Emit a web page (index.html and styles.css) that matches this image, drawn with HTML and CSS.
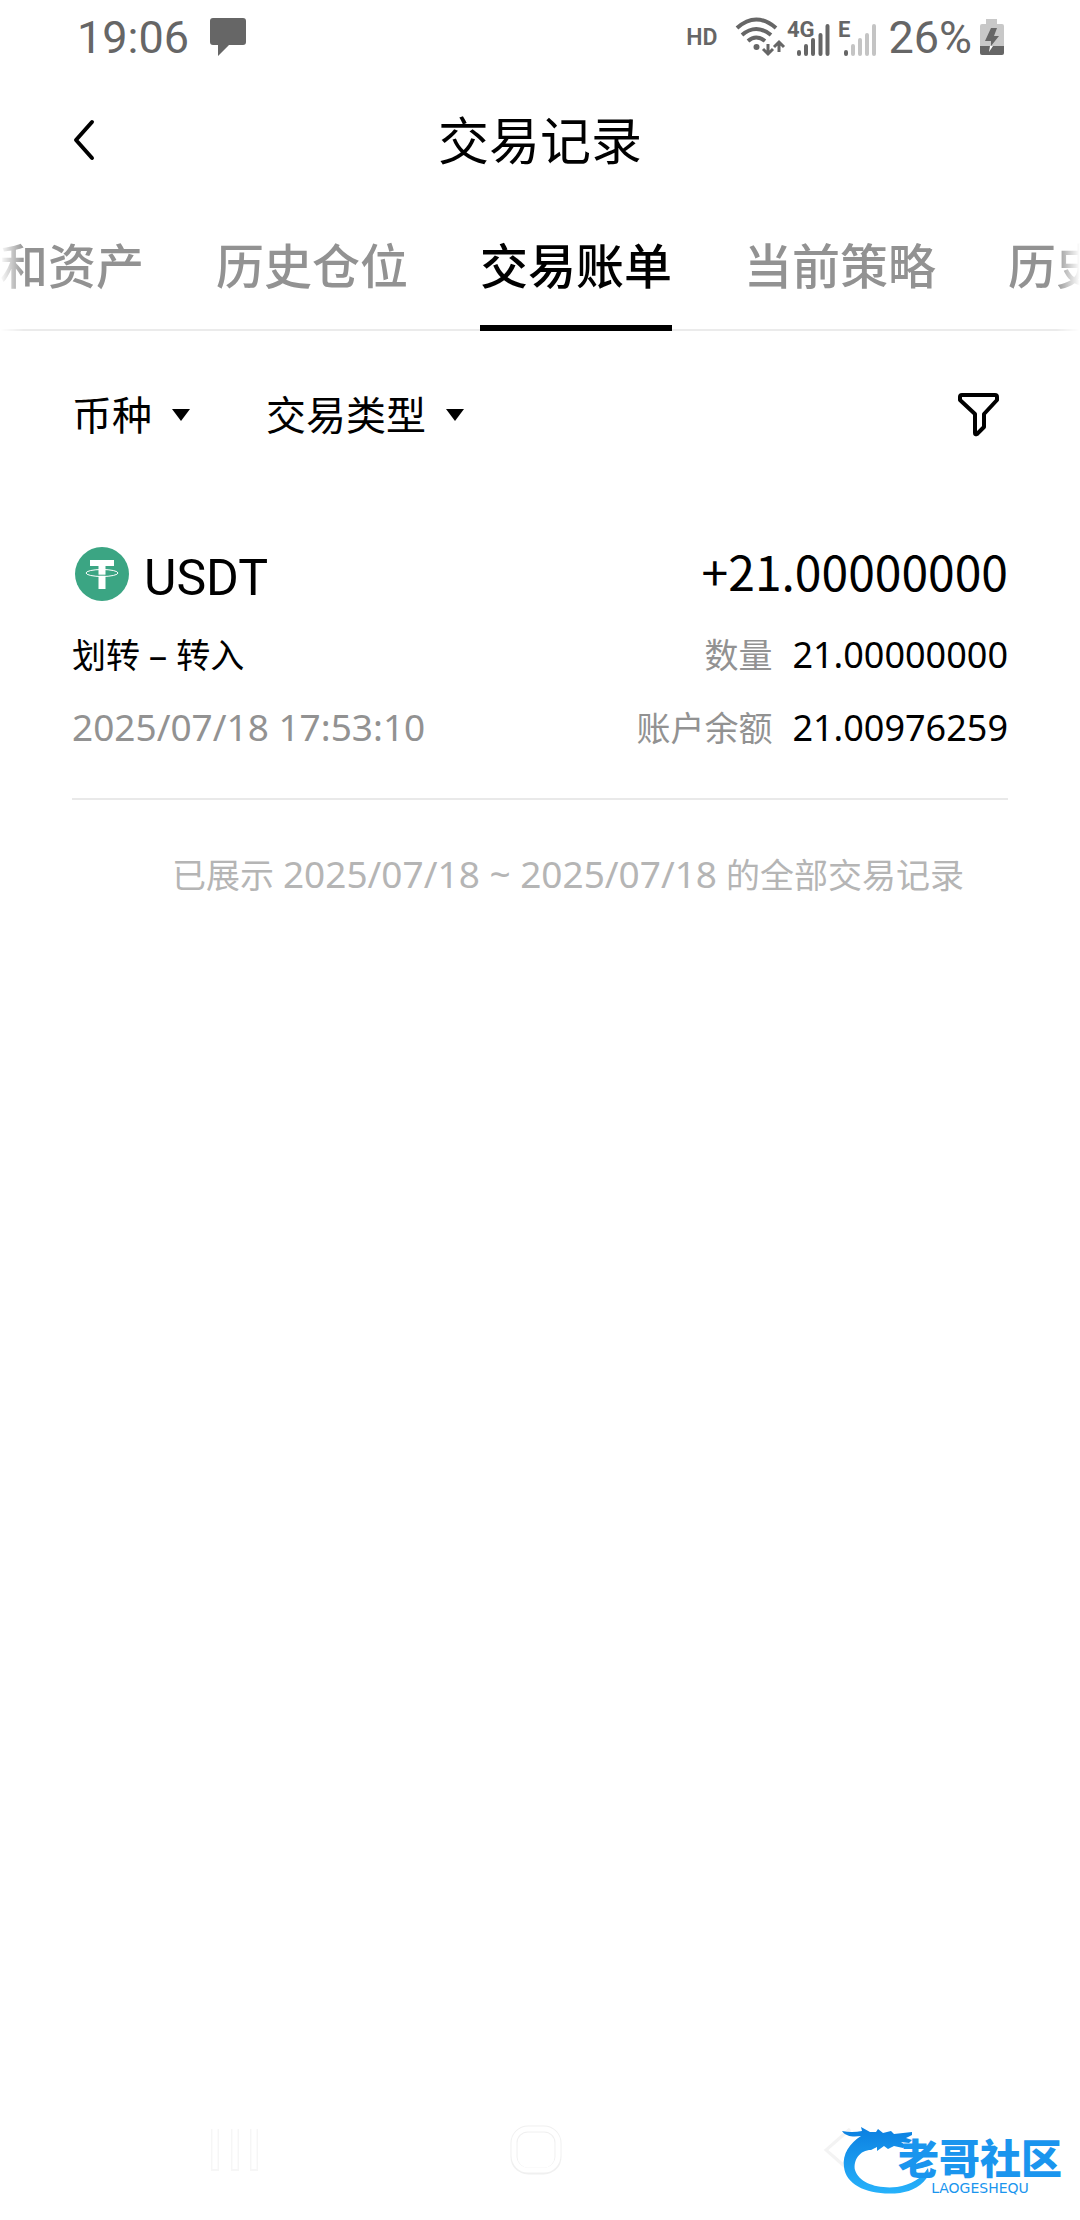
FILE: index.html
```html
<!DOCTYPE html>
<html lang="zh-CN">
<head>
<meta charset="utf-8">
<meta name="viewport" content="width=device-width, initial-scale=1">
<title>交易记录</title>
<link rel="stylesheet" href="styles.css">
</head>
<body>
<div class="status">
  <span class="status-time">19:06</span>
  <svg class="status-chat" width="38" height="40" viewBox="0 0 38 40" aria-hidden="true"><path d="M4 1h30q3 0 3 3v21q0 3-3 3H20L9 39V28H4q-3 0-3-3V4q0-3 3-3z" fill="#666"/></svg>
  <div class="status-right">
    <span class="status-hd">HD</span>
    <svg width="142" height="44" viewBox="0 0 142 44" aria-hidden="true">
      <g fill="none" stroke="#666" stroke-width="4">
        <path d="M2 13Q21-4 41 13"/><path d="M7 20Q21 8 36 20"/><path d="M13 26Q21 19 30 26"/>
        <path d="M33 29v10M28 34l5 5 5-5M44 37V27M39 32l5-5 5 5" stroke-width="3"/>
      </g>
      <circle cx="21.500" cy="32" r="3" fill="#666"/>
      <g stroke="#666" stroke-width="4" stroke-linecap="round">
        <path d="M64 37v2M71 31v8M78 25v14M85.500 20v19M92.500 11v28M111 37v2"/>
        <path d="M118 31v8M125 25v14M132 20v19M139 11v28" stroke="#c4c4c4"/>
      </g>
      <text class="net" x="52" y="22">4G</text>
      <text class="net" x="103" y="22">E</text>
    </svg>
    <span class="status-pct">26%</span>
    <svg class="battery" width="26" height="38" viewBox="0 0 26 38" aria-hidden="true">
      <path d="M7 1h11v5h5q2 0 2 2v20H1V8q0-2 2-2h4z" fill="#c8c8c8"/>
      <path d="M1 28h24v7q0 2-2 2H3q-2 0-2-2z" fill="#666"/>
      <path d="M12 10h6l-3 8h5l-8 10v-5H6z" fill="#666"/><path d="M11 28h3l-4 6z" fill="#fff"/>
    </svg>
  </div>
</div>

<header class="header">
  <button class="icon-btn" type="button" aria-label="返回"><svg width="24" height="44" viewBox="0 0 24 44"><path d="M20 4L4 22l16 18" fill="none" stroke="#000" stroke-width="4" stroke-linecap="round" stroke-linejoin="round"/></svg></button>
  <h1 class="title">交易记录</h1>
</header>

<nav class="tabs">
  <a class="tab" href="#assets">和资产</a>
  <a class="tab" href="#positions">历史仓位</a>
  <a class="tab tab-active" href="#bills" aria-current="page">交易账单</a>
  <a class="tab" href="#strategy">当前策略</a>
  <a class="tab" href="#history">历史</a>
</nav>

<main class="main">
  <div class="filters">
    <label class="filter">
      <select class="filter-select" aria-label="币种"><option>币种</option></select>
      <svg width="18" height="12" viewBox="0 0 18 12" aria-hidden="true"><path d="M0 0h18L9 12z"/></svg>
    </label>
    <label class="filter">
      <select class="filter-select" aria-label="交易类型"><option>交易类型</option></select>
      <svg width="18" height="12" viewBox="0 0 18 12" aria-hidden="true"><path d="M0 0h18L9 12z"/></svg>
    </label>
    <button class="icon-btn filter-more" type="button" aria-label="筛选"><svg width="44" height="46" viewBox="0 0 44 46"><path d="M5 3h33q2 0 2 2v3L27 22v13l-7 7q-2 1-2-1V22L3 8V5q0-2 2-2z" fill="none" stroke="#000" stroke-width="4" stroke-linejoin="round"/></svg></button>
  </div>

  <article class="record">
    <div class="row row-head">
      <span class="coin">
        <svg width="58" height="56" viewBox="0 0 58 56" aria-hidden="true"><circle cx="30" cy="28" r="27" fill="#3ba583"/><path d="M18 14h24v6h-8.500v23h-7V20H18z" fill="#fff"/><ellipse cx="30" cy="27" rx="16" ry="3.500" fill="none" stroke="#fff" stroke-width="1"/><path d="M26 29.200h8" stroke="#3ba583"/></svg>
        <span class="coin-name">USDT</span>
      </span>
      <strong class="amount">+21.00000000</strong>
    </div>
    <div class="row">
      <span>划转 <span class="num">–</span> 转入</span>
      <span class="pair"><span class="muted">数量</span><span class="value">21.00000000</span></span>
    </div>
    <div class="row">
      <time class="num muted">2025/07/18 17:53:10</time>
      <span class="pair"><span class="muted">账户余额</span><span class="value">21.00976259</span></span>
    </div>
  </article>
  <p class="end">已展示 <span class="num">2025/07/18 ~ 2025/07/18</span> 的全部交易记录</p>
</main>

<footer class="navbar">
  <button class="nav-btn" type="button" aria-label="最近任务"><svg width="50" height="50" viewBox="0 0 50 50"><path d="M5 4v42M25 4v42M44 4v42" stroke="#f6f6f6" stroke-width="8"/><path d="M5 4v40M25 4v40M44 4v40" stroke="#fff" stroke-width="5"/></svg></button>
  <button class="nav-btn" type="button" aria-label="主屏幕"><svg width="52" height="50" viewBox="0 0 52 50"><rect x="4" y="4" width="44" height="42" rx="14" fill="none" stroke="#f0f0f0" stroke-width="7"/><rect x="4" y="4" width="44" height="41" rx="14" fill="none" stroke="#fff" stroke-width="5"/></svg></button>
  <button class="nav-btn" type="button" aria-label="返回上一级"><svg width="50" height="50" viewBox="0 0 50 50"><path d="M38 4L14 25l24 21" fill="none" stroke="#f3f3f3" stroke-width="3"/></svg></button>
</footer>

<div class="brand">
  <svg class="brand-mark" width="92" height="72" viewBox="0 0 92 72" aria-hidden="true">
    <defs><linearGradient id="wave" x1="0" y1="0" x2="0" y2="1"><stop offset="0" stop-color="#0b7fe0"/><stop offset="1" stop-color="#27b2fb"/></linearGradient></defs>
    <path d="M0 5q10 2 20 0l-1-4 9 5 6 0 2-3 5 4 8-2 3 3 18-2v3l-6 3 6 2-3 3-8-1 6 4-4 2-9-2-6 3-4-3-7 5 0-4-6 3C18 24 11 34 13 44c4 13 22 19 42 17 14-2 25-9 31-19l1 6C81 60 70 65 58 67 28 70 4 60 2 41 0 28 8 17 19 10 12 11 4 11 0 5z" fill="url(#wave)"/>
  </svg>
  <div class="brand-words">
    <span class="brand-name">老哥社区</span>
    <span class="brand-latin">LAOGESHEQU</span>
  </div>
</div>
</body>
</html>
```

FILE: styles.css
```css
* { box-sizing: border-box; }

body {
  margin: 0;
  min-height: 100vh;
  display: flex;
  flex-direction: column;
  position: relative;
  overflow-x: hidden;
  background: #fff;
  color: #000;
  font-family: "Noto Sans", "Noto Sans CJK SC", sans-serif;
}

button, select {
  margin: 0;
  padding: 0;
  border: 0;
  background: none;
  color: inherit;
  font: inherit;
}

svg { display: block; flex: none; }

/* phone status bar */
.status {
  height: 74px;
  padding: 0 75px 0 77px;
  display: flex;
  align-items: center;
  color: #666;
  font-family: Roboto, sans-serif;
  font-size: 45px;
}
.status-chat { margin-left: 20px; }
.status-right { margin-left: auto; display: flex; align-items: center; }
.status-hd { font-size: 23px; font-weight: 600; margin-right: 18px; }
.net { font: 700 22px Roboto, sans-serif; fill: #666; }
.status-pct { margin: 0 7px 0 11px; }

/* title bar */
.header {
  height: 132px;
  padding: 0 72px;
  display: grid;
  grid-template-columns: 1fr auto 1fr;
  align-items: center;
}
.icon-btn { justify-self: start; }
.title { margin: 0; font-size: 51px; line-height: 72px; font-weight: 400; }

/* scrolling tab strip, faded at both edges */
.tabs {
  display: flex;
  gap: 72px;
  overflow: hidden;
  box-shadow: inset 0 -2px #ebebeb;
  -webkit-mask-image: linear-gradient(90deg, transparent, #000 24px, #000 calc(100% - 24px), transparent);
  mask-image: linear-gradient(90deg, transparent, #000 24px, #000 calc(100% - 24px), transparent);
}
.tab {
  flex: none;
  border-bottom: 6px solid transparent;
  color: #929292;
  font-size: 48px;
  line-height: 119px;
  font-weight: 500;
  text-decoration: none;
}
.tab-active { color: #000; border-bottom-color: #000; }

.main { flex: 1; padding: 0 72px; }

.filters { height: 168px; display: flex; align-items: center; gap: 76px; }
.filter { display: flex; align-items: center; gap: 20px; }
.filter-select { appearance: none; font-size: 40px; line-height: 60px; }
.filter-more { margin-left: auto; margin-right: 7px; }

/* one ledger entry */
.record { padding: 31px 0 35px; border-bottom: 2px solid #e9e9e9; font-size: 34px; }
.row { height: 73px; display: flex; align-items: center; justify-content: space-between; }
.row-head { height: 87px; }
.coin { display: flex; align-items: center; gap: 14px; }
.coin-name { padding-top: 8px; font-family: Roboto, sans-serif; font-size: 50px; }
.amount { padding-bottom: 8px; font-family: "Noto Sans CJK SC", sans-serif; font-size: 48px; line-height: 72px; font-weight: 400; }
.pair { display: flex; align-items: baseline; gap: 20px; }
.num { font-size: 37px; }
.value { font-size: 36px; }
.muted { color: #929292; }

.end {
  margin: 0;
  padding-left: 56px;
  color: #b5b5b5;
  font-size: 34px;
  line-height: 148px;
  text-align: center;
}

/* system navigation */
.navbar {
  height: 140px;
  padding: 0 218px 0 210px;
  display: flex;
  align-items: center;
  justify-content: space-between;
}

/* community badge floating over the corner */
.brand {
  position: absolute;
  right: 18px;
  bottom: 22px;
  display: flex;
  align-items: flex-end;
}
.brand-mark { margin-right: -36px; }
.brand-words { display: flex; flex-direction: column; align-items: center; color: #1a95ee; }
.brand-name { font: 900 41px/44px "Noto Sans CJK SC", sans-serif; }
.brand-latin { font: 14px/20px "DejaVu Sans", sans-serif; }
```
